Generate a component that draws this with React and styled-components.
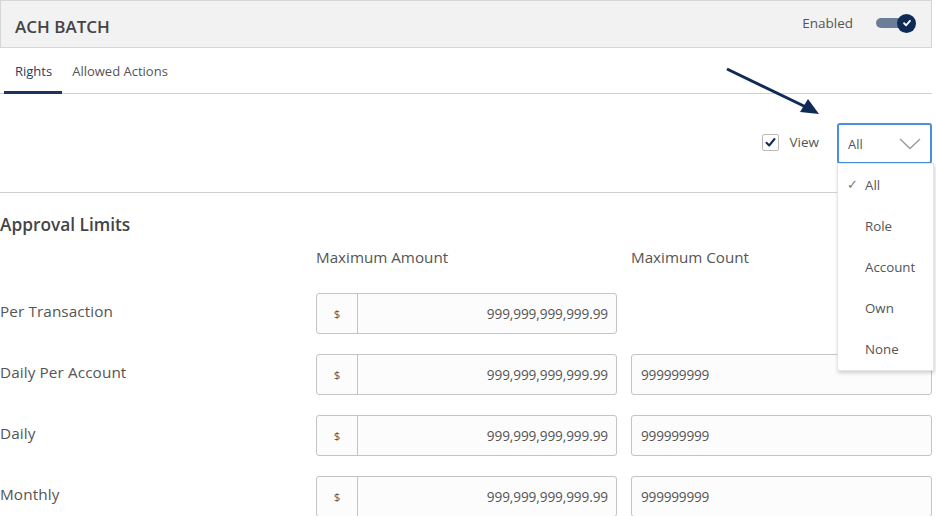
import React from "react";
import styled, { createGlobalStyle } from "styled-components";

const GlobalStyle = createGlobalStyle`
  html, body {
    margin: 0;
    padding: 0;
    background: #fff;
    font-family: "Open Sans", "Liberation Sans", sans-serif;
    color: #555;
  }
`;

const Page = styled.div`
  position: relative;
  width: 932px;
`;

const Header = styled.div`
  display: flex;
  justify-content: space-between;
  align-items: center;
  height: 48px;
  box-sizing: border-box;
  background-color: #f2f2f2;
  border: 1px solid #d6d6d6;
  padding: 0 15px 0 14px;
`;

const Title = styled.div`
  font-size: 17px;
  font-weight: 600;
  color: #444;
  margin-top: 5px;
`;

const EnabledWrap = styled.div`
  display: flex;
  align-items: center;
  gap: 23px;
  font-size: 13.5px;
  color: #555;
  margin-top: -3px;
`;

const Toggle = styled.div`
  position: relative;
  width: 34px;
  height: 10px;
  border-radius: 5px;
  background-color: #6c7d99;
  margin-right: 6px;
`;

const Knob = styled.div`
  position: absolute;
  right: -6px;
  top: -4px;
  width: 19px;
  height: 19px;
  border-radius: 50%;
  background-color: #0f2b55;
  display: flex;
  align-items: center;
  justify-content: center;
`;

const Tabs = styled.div`
  display: flex;
  align-items: flex-end;
  height: 45px;
  border-bottom: 1px solid #d0d0d0;
  padding-left: 4px;
`;

const Tab = styled.div`
  font-size: 13px;
  line-height: 18px;
  padding: 0 ${(p) => (p.$active ? "10px" : "0")} 11px ${(p) => (p.$active ? "11px" : "10px")};
  color: ${(p) => (p.$active ? "#1f3d6b" : "#555")};
  border-bottom: 3px solid ${(p) => (p.$active ? "#1b3560" : "transparent")};
  margin-bottom: -1px;
`;

const Toolbar = styled.div`
  display: flex;
  justify-content: flex-end;
  align-items: flex-start;
  height: 99px;
  padding-top: 29px;
  box-sizing: border-box;
  border-bottom: 1px solid #d0d0d0;
`;

const ViewCheck = styled.label`
  display: flex;
  align-items: center;
  gap: 11px;
  font-size: 13.5px;
  color: #555;
  margin-top: 10px;
  margin-right: 18px;
`;

const Box = styled.span`
  width: 15px;
  height: 15px;
  border: 1px solid #bbb;
  border-radius: 2px;
  display: flex;
  align-items: center;
  justify-content: center;
  background: #fff;
`;

const SelectWrap = styled.div`
  position: relative;
  width: 95px;
`;

const Select = styled.div`
  display: flex;
  align-items: center;
  justify-content: space-between;
  height: 41px;
  box-sizing: border-box;
  border: 2px solid #4a90d9;
  border-radius: 3px;
  padding: 0 9px 0 9px;
  font-size: 13px;
  color: #555;
`;

const Menu = styled.div`
  position: absolute;
  top: 40px;
  left: 0;
  width: 95px;
  background: #fff;
  border: 1px solid #e4e4e4;
  box-shadow: 1px 2px 4px rgba(0, 0, 0, 0.18);
  z-index: 5;
`;

const MenuItem = styled.div`
  display: flex;
  align-items: center;
  height: 41.2px;
  padding-left: 27px;
  font-size: 13.3px;
  color: #555;
  position: relative;
`;

const Tick = styled.span`
  position: absolute;
  left: 9px;
  top: 11px;
  font-size: 13px;
  color: #777;
`;

const Section = styled.div`
  padding-top: 20px;
`;

const SectionTitle = styled.div`
  font-size: 17.3px;
  line-height: 24px;
  font-weight: 600;
  color: #444;
`;

const Grid = styled.div`
  display: grid;
  grid-template-columns: 316px 315px 301px;
  row-gap: 20px;
  margin-top: 9px;
`;

const ColHead = styled.div`
  font-size: 15.2px;
  line-height: 20px;
  color: #555;
  padding-top: 1px;
  height: 27px;
  box-sizing: border-box;
`;

const RowLabel = styled.div`
  display: flex;
  align-items: center;
  height: 41px;
  margin-top: -3px;
  font-size: 15.3px;
  letter-spacing: 0.1px;
  color: #555;
`;

const AmountInput = styled.div`
  display: flex;
  width: 301px;
  height: 41px;
  box-sizing: border-box;
  border: 1px solid #c4c4c4;
  border-radius: 3px;
  background: #fcfcfc;
`;

const Prefix = styled.div`
  width: 40px;
  display: flex;
  align-items: center;
  justify-content: center;
  border-right: 1px solid #c4c4c4;
  font-size: 11.5px;
  color: #555;
`;

const AmountValue = styled.div`
  flex: 1;
  display: flex;
  align-items: center;
  justify-content: flex-end;
  padding-right: 8px;
  font-size: 13.6px;
  letter-spacing: -0.1px;
  color: #555;
`;

const CountInput = styled.div`
  display: flex;
  align-items: center;
  width: 301px;
  height: 41px;
  box-sizing: border-box;
  border: 1px solid #c4c4c4;
  border-radius: 3px;
  background: #fcfcfc;
  padding-left: 9px;
  font-size: 13.6px;
  letter-spacing: -0.2px;
  color: #555;
`;

const Arrow = styled.svg`
  position: absolute;
  left: 720px;
  top: 62px;
  pointer-events: none;
`;

const rows = [
  { label: "Per Transaction", count: null },
  { label: "Daily Per Account", count: "999999999" },
  { label: "Daily", count: "999999999" },
  { label: "Monthly", count: "999999999" },
];

const options = ["All", "Role", "Account", "Own", "None"];

export default function App() {
  return (
    <Page>
      <GlobalStyle />
      <Header>
        <Title>ACH BATCH</Title>
        <EnabledWrap>
          Enabled
          <Toggle>
            <Knob>
              <svg width="10" height="10" viewBox="0 0 12 12">
                <path d="M2.5 6.3 L5 8.7 L9.6 3.4" fill="none" stroke="#fff" strokeWidth="2.2" strokeLinecap="round" strokeLinejoin="round" />
              </svg>
            </Knob>
          </Toggle>
        </EnabledWrap>
      </Header>
      <Tabs>
        <Tab $active>Rights</Tab>
        <Tab>Allowed Actions</Tab>
      </Tabs>
      <Toolbar>
        <ViewCheck>
          <Box>
            <svg width="13" height="13" viewBox="0 0 13 13">
              <path d="M2.5 6.8 L5.2 9.5 L10.5 3" fill="none" stroke="#0f2b55" strokeWidth="2" strokeLinecap="round" strokeLinejoin="round" />
            </svg>
          </Box>
          View
        </ViewCheck>
        <SelectWrap>
          <Select>
            All
            <svg width="22" height="12" viewBox="0 0 22 12">
              <path d="M1 1 L11 10.5 L21 1" fill="none" stroke="#999" strokeWidth="1.3" />
            </svg>
          </Select>
          <Menu>
            {options.map((o, i) => (
              <MenuItem key={o}>
                {i === 0 && <Tick>✓</Tick>}
                {o}
              </MenuItem>
            ))}
          </Menu>
        </SelectWrap>
      </Toolbar>
      <Section>
        <SectionTitle>Approval Limits</SectionTitle>
        <Grid>
          <div />
          <ColHead>Maximum Amount</ColHead>
          <ColHead>Maximum Count</ColHead>
          {rows.map((r) => (
            <React.Fragment key={r.label}>
              <RowLabel>{r.label}</RowLabel>
              <AmountInput>
                <Prefix>$</Prefix>
                <AmountValue>999,999,999,999.99</AmountValue>
              </AmountInput>
              {r.count ? <CountInput>{r.count}</CountInput> : <div />}
            </React.Fragment>
          ))}
        </Grid>
      </Section>
      <Arrow width="110" height="60" viewBox="0 0 110 60">
        <line x1="7" y1="7" x2="88" y2="46" stroke="#0f2b55" strokeWidth="3" />
        <polygon points="99,52 80,50 88,37" fill="#0f2b55" />
      </Arrow>
    </Page>
  );
}
